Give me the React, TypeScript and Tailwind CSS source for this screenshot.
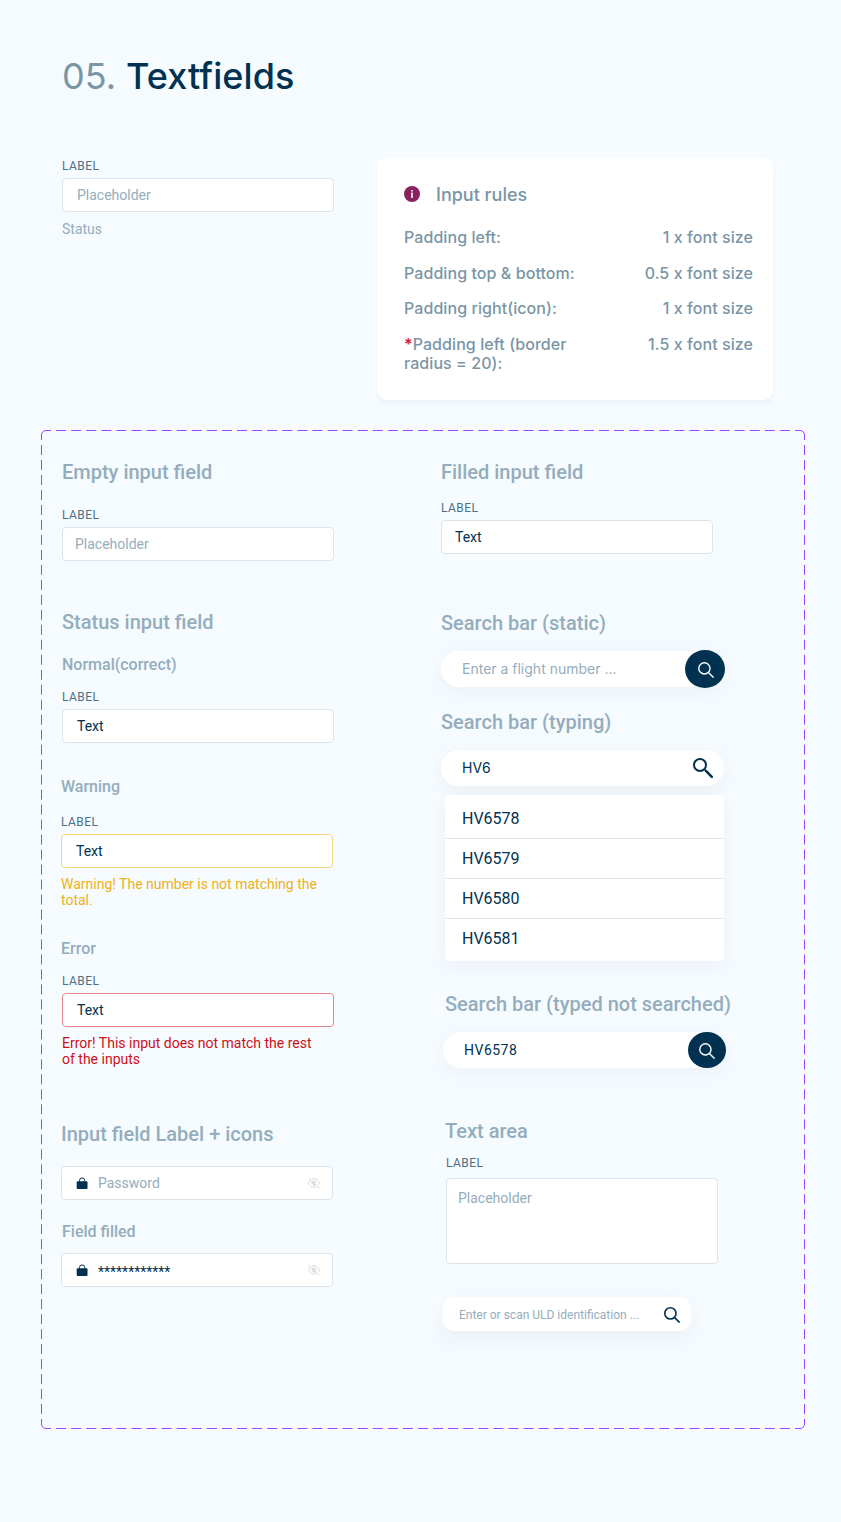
import type { ReactNode } from "react";

const roboto = "font-['Roboto',sans-serif]";
const inter = "font-['Inter',sans-serif]";

function Heading({ children, className = "" }: { children: ReactNode; className?: string }) {
  return (
    <h2 className={`h-6 whitespace-nowrap text-xl leading-6 font-medium text-[#94adbd] ${className}`}>{children}</h2>
  );
}

function Subheading({ children, className = "" }: { children: ReactNode; className?: string }) {
  return <h3 className={`h-5 text-base leading-[22px] font-medium text-[#94adbd] ${className}`}>{children}</h3>;
}

type FieldProps = {
  className?: string;
  boxClass?: string;
  textClass?: string;
  message?: ReactNode;
  messageClass?: string;
  children: ReactNode;
};

function Field({
  className = "",
  boxClass = "border-[#dde5ea] pl-[14px]",
  textClass = "text-[#003150]",
  message,
  messageClass = "mt-2",
  children,
}: FieldProps) {
  return (
    <div className={`w-[272px] ${className}`}>
      <div className="mb-1 h-4 text-xs leading-4 tracking-[0.035em] text-[#4d7087]">LABEL</div>
      <div className={`flex h-[34px] items-center rounded-[4px] border bg-white text-sm leading-4 ${boxClass} ${textClass}`}>
        {children}
      </div>
      {message && <p className={`text-sm leading-4 ${messageClass}`}>{message}</p>}
    </div>
  );
}

function SearchIcon({ className, width = 1.4 }: { className: string; width?: number }) {
  return (
    <svg viewBox="0 0 16 16" fill="none" stroke="currentColor" strokeWidth={width} className={className}>
      <circle cx="6.4" cy="6.4" r="5.6" />
      <path d="M10.4 10.4 15.6 15.6" />
    </svg>
  );
}

function BoldSearchIcon({ className }: { className: string }) {
  return (
    <svg viewBox="0 0 20 20" fill="none" stroke="currentColor" className={className}>
      <circle cx="7" cy="7" r="6" strokeWidth="2" />
      <path d="M11.2 11.2 13.5 13.5" strokeWidth="1.6" />
      <path d="M13.2 13.2 18.8 18.8" strokeWidth="2.5" strokeLinecap="round" />
    </svg>
  );
}

function LockIcon() {
  return (
    <svg viewBox="0 0 12 13" className="h-[13px] w-3 text-[#003150]">
      <path d="M3.500 5V3.500a2.600 2.600 0 0 1 5.200 0V5" fill="none" stroke="currentColor" strokeWidth="1" />
      <rect x="0.700" y="4.200" width="10.800" height="7.800" rx="1" fill="currentColor" />
    </svg>
  );
}

function HiddenEyeIcon() {
  return (
    <svg viewBox="0 0 12 12" fill="none" stroke="#cccccc" strokeWidth="0.7" className="h-3 w-3">
      <path d="M2.400 2.700C1.500 3.500.9 4.700.6 6c.7 2.500 2.800 4.200 5.400 4.200.9 0 1.700-.2 2.400-.5" />
      <path d="M4 1.900c.6-.2 1.300-.3 2-.3 2.600 0 4.700 1.700 5.400 4.400-.2.900-.6 1.600-1.200 2.300" />
      <path d="M4.400 4.400a2.300 2.300 0 0 0 3.200 3.200M6.200 3.700a2.300 2.300 0 0 1 2.100 2.100M6 3v6M3.500 6h4" />
      <path d="M.5.7 11.500 11.300" />
    </svg>
  );
}

function PasswordField({ children, className = "" }: { children: ReactNode; className?: string }) {
  return (
    <div
      className={`flex h-[34px] w-[272px] items-center rounded-[4px] border border-[#dde5ea] bg-white pr-3 pl-[14px] text-sm leading-4 ${className}`}
    >
      <LockIcon />
      <span className="ml-[10px] flex-1">{children}</span>
      <HiddenEyeIcon />
    </div>
  );
}

function DashedOutline() {
  return (
    <svg
      viewBox="0 0 764 999"
      fill="none"
      stroke="#9747ff"
      className="pointer-events-none absolute inset-0 h-[999px] w-[764px]"
    >
      <path d="M5 .5H759M5 998.500H759" strokeDasharray="10 5.080" strokeDashoffset="5" />
      <path d="M.5 5V994M763.500 5V994" strokeDasharray="10 4.985" strokeDashoffset="5" />
      <path d="M.5 5A4.500 4.500 0 0 1 5 .5M759 .5a4.500 4.500 0 0 1 4.500 4.500M763.500 994a4.500 4.500 0 0 1-4.500 4.500M5 998.500A4.500 4.500 0 0 1 .5 994" />
    </svg>
  );
}

const rules: { name: ReactNode; value: string }[] = [
  { name: "Padding left:", value: "1 x font size" },
  { name: "Padding top & bottom:", value: "0.5 x font size" },
  { name: "Padding right(icon):", value: "1 x font size" },
  {
    name: (
      <>
        <span className="font-semibold text-[#d8232a]">*</span>Padding left (border radius = 20):
      </>
    ),
    value: "1.5 x font size",
  },
];

const flights = ["HV6578", "HV6579", "HV6580", "HV6581"];

const softShadow = "shadow-[0_4px_20px_rgba(0,49,80,0.05)]";

export default function App() {
  return (
    <main className={`h-[1522px] w-[841px] bg-[#f6fbff] ${roboto}`}>
      <h1
        className={`h-[158px] pt-[54px] pl-[62px] text-4xl leading-[44px] font-medium tracking-[0.08px] text-[#003150] ${inter}`}
      >
        <span className="font-normal text-[#7a95a6]">05.</span> Textfields
      </h1>

      <div className="flex h-[272px] items-start pl-[62px]">
        <Field textClass="text-[#94adbd]" message="Status" messageClass="mt-[9px] text-[#94adbd]">
          Placeholder
        </Field>
        <section
          className={`ml-[43px] h-[242px] w-[396px] rounded-[10px] bg-white pt-[26px] pr-5 pl-[27px] font-medium text-[#7a95a6] shadow-[0_4px_4px_rgba(0,49,80,0.04)] ${inter}`}
        >
          <div className="flex h-[22px] items-start">
            <svg viewBox="0 0 16 16" className="mt-0.5 h-4 w-4">
              <circle cx="8" cy="8" r="8" fill="#8a2260" />
              <path d="M7.200 4h1.600v1.500H7.200zM7.200 6.500h1.600V12H7.200z" fill="#fff" />
            </svg>
            <h2 className="ml-4 text-lg leading-[22px]">Input rules</h2>
          </div>
          <dl className="mt-[22px] text-base leading-[19px] tracking-[0.07px]">
            {rules.map((rule, i) => (
              <div key={i} className="mb-[17px] flex justify-between nth-2:mb-4">
                <dt className="w-[190px]">{rule.name}</dt>
                <dd>{rule.value}</dd>
              </div>
            ))}
          </dl>
        </section>
      </div>

      <section className="relative ml-[41px] flex h-[999px] w-[764px] pt-[30px] pl-5">
        <DashedOutline />
        <div className="w-[380px]">
          <Heading className="ml-px">Empty input field</Heading>
          <Field className="mt-[23px] ml-px" boxClass="border-[#dde5ea] pl-3" textClass="text-[#94adbd]">
            Placeholder
          </Field>

          <Heading className="mt-[49px] ml-px">Status input field</Heading>
          <Subheading className="mt-5 ml-px">Normal(correct)</Subheading>
          <Field className="mt-[15px] ml-px">Text</Field>

          <Subheading className="mt-[33px]">Warning</Subheading>
          <Field
            className="mt-[18px]"
            boxClass="border-[#f5d67d] pl-[14px]"
            message="Warning! The number is not matching the total."
            messageClass="mt-2 text-[#edb117]"
          >
            Text
          </Field>

          <Subheading className="mt-[30px]">Error</Subheading>
          <Field
            className="mt-[15px] ml-px"
            boxClass="border-[#e5868b] pl-[14px]"
            message="Error! This input does not match the rest of the inputs"
            messageClass="mt-2 w-[260px] text-[#cc1117]"
          >
            Text
          </Field>

          <Heading className="mt-[55px]">Input field Label + icons</Heading>
          <PasswordField className="mt-5 text-[#94adbd]">Password</PasswordField>
          <Subheading className="mt-[21px] ml-px">Field filled</Subheading>
          <PasswordField className="mt-3 text-[#003150]">
            <span className="block pt-1">************</span>
          </PasswordField>
        </div>

        <div className="w-[300px]">
          <Heading>Filled input field</Heading>
          <Field className="mt-4" boxClass="border-[#dde5ea] pl-[13px]">
            Text
          </Field>

          <Heading className="mt-[57px]">Search bar (static)</Heading>
          <div className={`mt-4 flex h-9 w-[284px] items-center rounded-[20px] bg-white pl-[21px] ${softShadow}`}>
            <span className={`flex-1 text-sm text-[#94adbd] ${inter}`}>Enter a flight number ...</span>
            <span className="flex h-[38px] w-10 items-center justify-center rounded-[50%] bg-[#003150] pt-px pl-px text-white">
              <SearchIcon className="h-4 w-4" />
            </span>
          </div>

          <Heading className="mt-[23px]">Search bar (typing)</Heading>
          <div
            className={`mt-4 flex h-9 w-[283px] items-center rounded-[20px] bg-white pr-[11px] pl-[21px] text-[#003150] ${softShadow}`}
          >
            <span className={`flex-1 text-sm ${inter}`}>HV6</span>
            <BoldSearchIcon className="h-5 w-5" />
          </div>
          <ul
            className={`mt-[9px] ml-1 h-[166px] w-[279px] rounded-[4px] bg-white pt-1 text-base text-[#003150] ${softShadow}`}
          >
            {flights.map((flight) => (
              <li
                key={flight}
                className="flex h-10 items-center border-b border-[#e2e9ee] pt-px pl-[17px] last:border-b-transparent"
              >
                {flight}
              </li>
            ))}
          </ul>

          <Heading className="mt-[31px] ml-1">Search bar (typed not searched)</Heading>
          <div className={`mt-4 ml-[2px] flex h-9 w-[283px] items-center rounded-[20px] bg-white pl-[21px] ${softShadow}`}>
            <span className="flex-1 text-sm tracking-[0.035em] text-[#003150]">HV6578</span>
            <span className="flex h-9 w-[38px] items-center justify-center rounded-[50%] bg-[#003150] pt-px text-white">
              <SearchIcon className="h-4 w-4" />
            </span>
          </div>

          <Heading className="mt-[51px] ml-1">Text area</Heading>
          <div className="mt-3 ml-[5px] w-[272px]">
            <div className="h-4 text-xs leading-4 tracking-[0.035em] text-[#4d7087]">LABEL</div>
            <div className="mt-[7px] h-[86px] rounded-[4px] border border-[#dde5ea] bg-white pt-[11px] pl-[11px] text-sm leading-4 text-[#94adbd]">
              Placeholder
            </div>
          </div>

          <div className="mt-[33px] ml-[2px] flex h-[34px] w-[248px] items-center rounded-[12px] bg-white pr-[11px] pl-4 shadow-[0_8px_20px_rgba(0,49,80,0.06)]">
            <span className="flex-1 pt-px text-xs text-[#94adbd]">Enter or scan ULD identification ...</span>
            <SearchIcon className="mt-0.5 h-4 w-4 text-[#003150]" width={1.6} />
          </div>
        </div>
      </section>
    </main>
  );
}
